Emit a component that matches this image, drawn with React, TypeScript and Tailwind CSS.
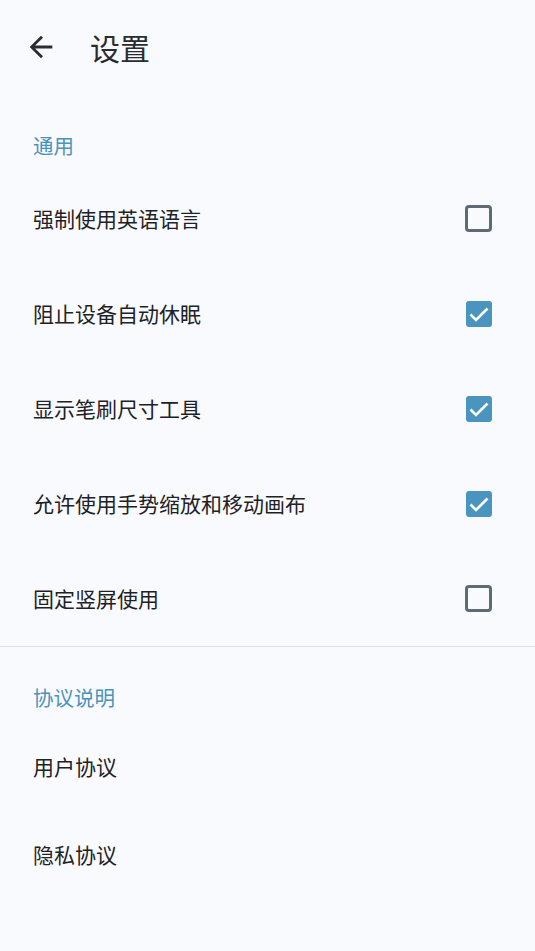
import React, { useState } from "react";

const font = { fontFamily: '"Noto Sans CJK SC", "Noto Sans", sans-serif' };

const Check = ({ checked, onClick }: { checked: boolean; onClick: () => void }) =>
  checked ? (
    <button onClick={onClick} className="flex h-[26px] w-[26px] items-center justify-center rounded-[3px] bg-[#4a94c0]">
      <svg width="24" height="24" viewBox="0 0 24 24">
        <path d="M3.5 12.5l5.5 5.5L20.5 6.5" fill="none" stroke="#fff" strokeWidth="2.6" />
      </svg>
    </button>
  ) : (
    <button onClick={onClick} className="h-[27px] w-[27px] rounded-[4px] border-[3px] border-[#5f6b74]" />
  );

const App = () => {
  const [opts, setOpts] = useState([
    { label: "强制使用英语语言", on: false },
    { label: "阻止设备自动休眠", on: true },
    { label: "显示笔刷尺寸工具", on: true },
    { label: "允许使用手势缩放和移动画布", on: true },
    { label: "固定竖屏使用", on: false },
  ]);

  const toggle = (i: number) =>
    setOpts(opts.map((o, j) => (j === i ? { ...o, on: !o.on } : o)));

  return (
    <div className="min-h-[951px] w-[535px] bg-[#f9fafe] text-[#1d2226]" style={font}>
      <div className="flex h-[96px] items-center pb-[2px] pl-[24px]">
        <svg width="34" height="34" viewBox="0 0 24 24" className="text-[#2a2d30]">
          <path d="M20 11H7.83l5.59-5.59L12 4l-8 8 8 8 1.41-1.41L7.83 13H20v-2z" fill="currentColor" />
        </svg>
        <span className="ml-[32px] text-[30px] text-[#2a2d30]">设置</span>
      </div>

      <div className="pl-[33px] pt-[35px] text-[20.5px] leading-[28px] text-[#4b93bc]">通用</div>

      <div className="mt-[12px]">
        {opts.map((o, i) => (
          <div key={o.label} className="flex h-[95px] items-center justify-between pl-[33px] pr-[43px]">
            <span className="text-[21px]">{o.label}</span>
            <Check checked={o.on} onClick={() => toggle(i)} />
          </div>
        ))}
      </div>

      <div className="h-px bg-[#dfe1e5]" />

      <div className="pl-[33px] pt-[36px] text-[20.5px] leading-[28px] text-[#4b93bc]">协议说明</div>

      <div className="mt-[40px] flex h-[88px] items-start pl-[33px]">
        <span className="text-[21px]">用户协议</span>
      </div>
      <div className="flex h-[88px] items-start pl-[33px]">
        <span className="text-[21px]">隐私协议</span>
      </div>
    </div>
  );
};

export default App;
